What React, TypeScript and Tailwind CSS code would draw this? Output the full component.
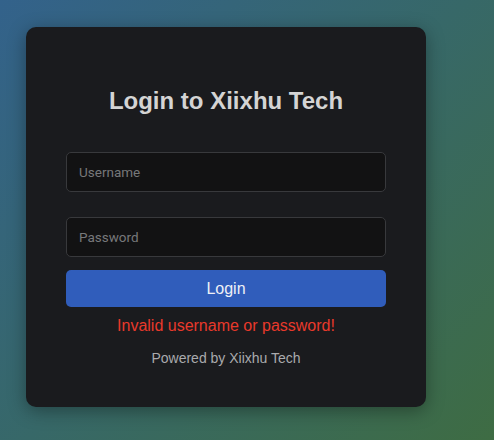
export default function App() {
  return (
    <div className="w-[494px] h-[440px] overflow-hidden bg-[linear-gradient(135deg,#33628b_0%,#376868_50%,#3e6c43_100%)] pl-[26px] pt-[27px]" style={{ fontFamily: '"Liberation Sans", Arial, sans-serif' }}>
      <div className="w-[400px] h-[380px] rounded-[10px] bg-[#1a1b1e] shadow-[0_4px_18px_rgba(0,0,0,0.35)] px-[40px] pt-[60px] flex flex-col">
        <h2 className="text-center text-[24px] leading-[28px] font-bold text-[#d4d4d4]">Login to Xiixhu Tech</h2>
        <input
          placeholder="Username"
          className="mt-[37px] h-[40px] w-full rounded-[5px] border border-[#38393c] bg-[#121213] px-[12px] text-[13.5px] text-[#ddd] placeholder:text-[#77787a] outline-none"
          style={{ fontFamily: 'Roboto, "Liberation Sans", sans-serif' }}
        />
        <input
          placeholder="Password"
          className="mt-[25px] h-[40px] w-full rounded-[5px] border border-[#38393c] bg-[#121213] px-[12px] text-[13.5px] text-[#ddd] placeholder:text-[#77787a] outline-none"
          style={{ fontFamily: 'Roboto, "Liberation Sans", sans-serif' }}
        />
        <button className="mt-[13px] h-[37px] w-full rounded-[5px] bg-[#305dbb] text-[16px] text-[#eef0f6]">Login</button>
        <p className="mt-[10px] text-center text-[16px] leading-[18px] text-[#e8392b]">Invalid username or password!</p>
        <p className="mt-[15px] text-center text-[14px] leading-[16px] text-[#a9aaad]">Powered by Xiixhu Tech</p>
      </div>
    </div>
  );
}
